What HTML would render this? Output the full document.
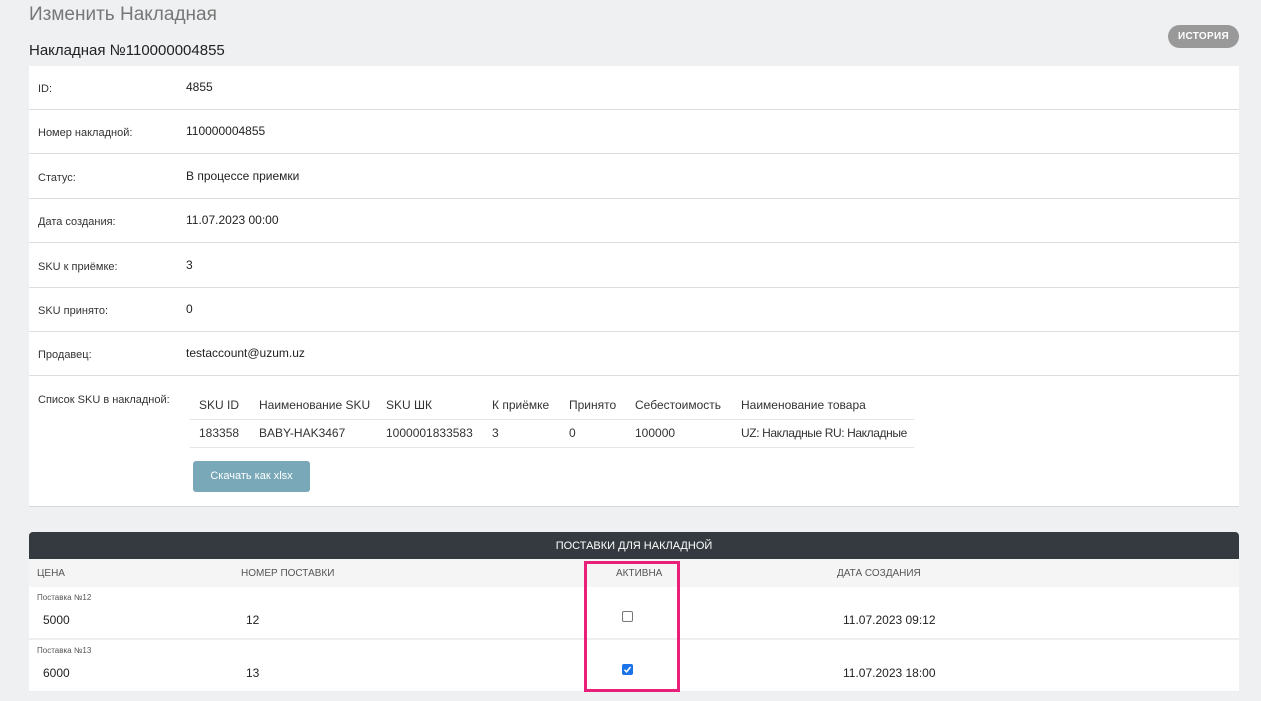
<!DOCTYPE html>
<html><head><meta charset="utf-8"><style>
*{box-sizing:border-box;margin:0;padding:0}
body{width:1261px;height:701px;background:#eff0f2;font-family:"Liberation Sans","DejaVu Sans",sans-serif;color:#222;position:relative;overflow:hidden}
.abs{position:absolute}
h1{position:absolute;left:29px;top:4px;font-size:19px;font-weight:normal;color:#777}
h2{position:absolute;left:29px;top:42px;font-size:15px;font-weight:normal;color:#222}
.btnh{left:1168px;top:25px;width:71px;height:23px;border-radius:12px;background:#999;color:#fff;font-size:10px;font-weight:bold;text-align:center;line-height:23px;letter-spacing:.3px}
.card{left:29px;top:66px;width:1210px;height:441px;background:#fff;border-bottom:1px solid #d8d8d8}
.row{position:absolute;left:0;width:1210px;height:44px;border-bottom:1px solid #ddd}
.lab{position:absolute;left:9px;top:17px;font-size:11px;color:#333}
.val{position:absolute;left:157px;top:14px;font-size:12px;color:#222}
table{border-collapse:collapse;font-size:12px;color:#333;table-layout:fixed;width:724px}
.sku td{padding:0 0 0 0;height:28px;white-space:nowrap;overflow:hidden}
.dark{left:29px;top:532px;width:1210px;height:27px;background:#343a40;border-radius:4px 4px 0 0;color:#fff;font-size:11px;text-align:center;line-height:28px}
.hd{left:29px;top:559px;width:1210px;height:28px;background:#f5f5f5;font-size:10px;color:#555}
.r{left:29px;width:1210px;height:52px;background:#fff;border-bottom:1px solid #eee}
.small{font-size:8px;color:#555}
.t{font-size:12px;color:#222}
.cb{width:11px;height:11px;border:1px solid #777;border-radius:2px;background:#fff}
</style></head><body>
<h1>Изменить Накладная</h1>
<h2>Накладная №110000004855</h2>
<div class="abs btnh">ИСТОРИЯ</div>
<div class="abs card">
<div class="row" style="top:0"><span class="lab">ID:</span><span class="val">4855</span></div>
<div class="row" style="top:44px"><span class="lab">Номер накладной:</span><span class="val">110000004855</span></div>
<div class="row" style="top:89px"><span class="lab">Статус:</span><span class="val">В процессе приемки</span></div>
<div class="row" style="top:133px"><span class="lab">Дата создания:</span><span class="val">11.07.2023 00:00</span></div>
<div class="row" style="top:178px"><span class="lab">SKU к приёмке:</span><span class="val">3</span></div>
<div class="row" style="top:222px"><span class="lab">SKU принято:</span><span class="val">0</span></div>
<div class="row" style="top:266px"><span class="lab">Продавец:</span><span class="val">testaccount@uzum.uz</span></div>
<span class="lab" style="top:328px">Список SKU в накладной:</span>
<table class="sku abs" style="left:161px;top:325px">
<colgroup><col style="width:69px"><col style="width:127px"><col style="width:106px"><col style="width:77px"><col style="width:66px"><col style="width:106px"><col style="width:173px"></colgroup>
<tr style="border-bottom:1px solid #e5e5e5"><td style="padding-left:9px">SKU ID</td><td>Наименование SKU</td><td>SKU ШК</td><td>К приёмке</td><td>Принято</td><td>Себестоимость</td><td>Наименование товара</td></tr>
<tr style="border-bottom:1px solid #e5e5e5"><td style="padding-left:9px">183358</td><td>BABY-HAK3467</td><td>1000001833583</td><td>3</td><td>0</td><td>100000</td><td style="letter-spacing:-0.4px">UZ: Накладные RU: Накладные</td></tr>
</table>
<div class="abs" style="left:164px;top:395px;width:117px;height:31px;background:#79a8b8;border-radius:3px;color:#fff;font-size:11px;text-align:center;line-height:31px">Скачать как xlsx</div>
</div>
<div class="abs dark">ПОСТАВКИ ДЛЯ НАКЛАДНОЙ</div>
<div class="abs hd">
<span class="abs" style="left:8px;top:9px">ЦЕНА</span>
<span class="abs" style="left:212px;top:9px">НОМЕР ПОСТАВКИ</span>
<span class="abs" style="left:587px;top:9px">АКТИВНА</span>
<span class="abs" style="left:808px;top:9px">ДАТА СОЗДАНИЯ</span>
</div>
<div class="abs r" style="top:587px">
<span class="abs small" style="left:8px;top:6px">Поставка №12</span>
<span class="abs t" style="left:14px;top:26px">5000</span>
<span class="abs t" style="left:217px;top:26px">12</span>
<div class="abs cb" style="left:593px;top:24px"></div>
<span class="abs t" style="left:814px;top:26px">11.07.2023 09:12</span>
</div>
<div class="abs r" style="top:640px">
<span class="abs small" style="left:8px;top:6px">Поставка №13</span>
<span class="abs t" style="left:14px;top:26px">6000</span>
<span class="abs t" style="left:217px;top:26px">13</span>
<div class="abs cb" style="left:593px;top:24px;background:#1a73e8;border-color:#1a73e8"><svg width="9" height="9" viewBox="0 0 9 9" style="position:absolute;left:0;top:0"><path d="M1.5 4.8L3.6 6.8L7.5 2" stroke="#fff" stroke-width="1.6" fill="none"/></svg></div>
<span class="abs t" style="left:814px;top:26px">11.07.2023 18:00</span>
</div>
<div class="abs" style="left:584px;top:561px;width:96px;height:131px;border:3px solid #e8207a"></div>
</body></html>
